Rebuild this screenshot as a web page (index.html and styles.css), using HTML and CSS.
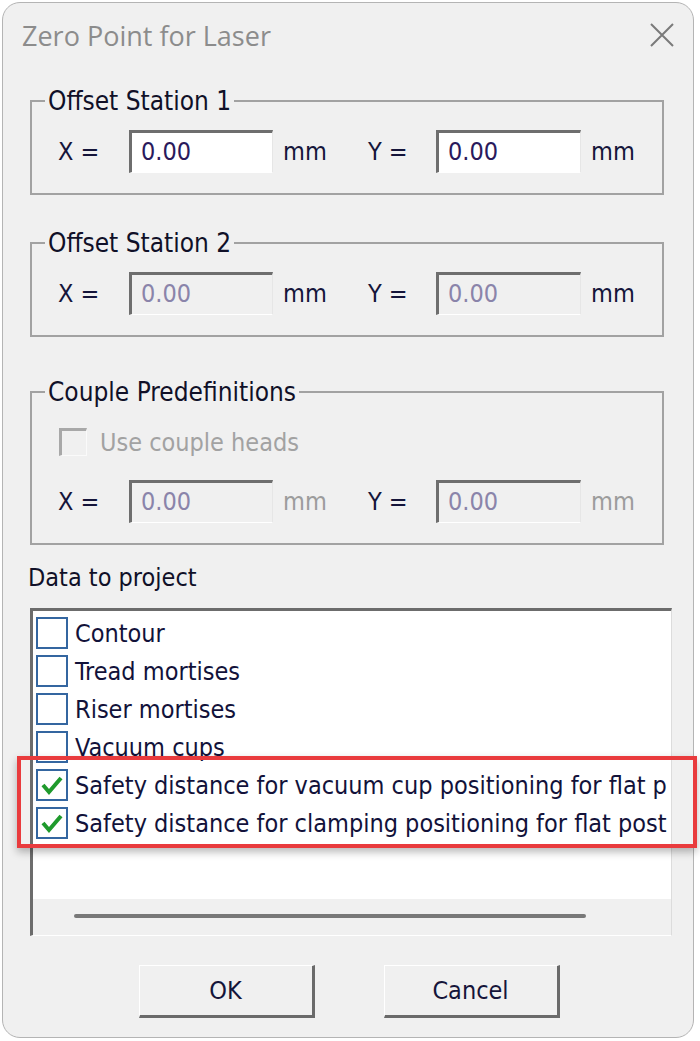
FILE: index.html
```html
<!DOCTYPE html>
<html>
<head>
<meta charset="utf-8">
<link rel="stylesheet" href="styles.css">
</head>
<body>
<div class="window">
  <div class="titlebar">
    <span class="title">Zero Point for Laser</span>
    <svg class="close" width="26" height="26" viewBox="0 0 26 26"><path d="M2 2 L24 24 M24 2 L2 24" stroke="#7a7a7a" stroke-width="2" fill="none"/></svg>
  </div>
  <div class="content">
    <fieldset class="group">
      <legend>Offset Station 1</legend>
      <div class="row">
        <span class="lbl">X =</span><div class="field">0.00</div><span class="unit">mm</span>
        <span class="lbl">Y =</span><div class="field">0.00</div><span class="unit">mm</span>
      </div>
    </fieldset>
    <fieldset class="group g2">
      <legend>Offset Station 2</legend>
      <div class="row">
        <span class="lbl">X =</span><div class="field disabled">0.00</div><span class="unit">mm</span>
        <span class="lbl">Y =</span><div class="field disabled">0.00</div><span class="unit">mm</span>
      </div>
    </fieldset>
    <fieldset class="group g3">
      <legend>Couple Predefinitions</legend>
      <div class="checkrow">
        <span class="dcb"></span><span class="dtext">Use couple heads</span>
      </div>
      <div class="row row3">
        <span class="lbl">X =</span><div class="field disabled">0.00</div><span class="unit dim">mm</span>
        <span class="lbl">Y =</span><div class="field disabled">0.00</div><span class="unit dim">mm</span>
      </div>
    </fieldset>
    <div class="section-label">Data to project</div>
    <div class="list">
      <div class="items">
        <div class="item"><span class="cb"></span><span class="txt">Contour</span></div>
        <div class="item"><span class="cb"></span><span class="txt">Tread mortises</span></div>
        <div class="item"><span class="cb"></span><span class="txt">Riser mortises</span></div>
        <div class="item"><span class="cb"></span><span class="txt">Vacuum cups</span></div>
        <div class="item"><span class="cb"><svg width="28" height="28" viewBox="0 0 28 28"><path d="M5 14 L11 21 L23 7" stroke="#1f9a2c" stroke-width="4" fill="none" stroke-linejoin="miter"/></svg></span><span class="txt">Safety distance for vacuum cup positioning for flat p</span></div>
        <div class="item"><span class="cb"><svg width="28" height="28" viewBox="0 0 28 28"><path d="M5 14 L11 21 L23 7" stroke="#1f9a2c" stroke-width="4" fill="none" stroke-linejoin="miter"/></svg></span><span class="txt">Safety distance for clamping positioning for flat post</span></div>
      </div>
      <div class="hscroll"><div class="thumb"></div></div>
      <div class="highlight"></div>
    </div>
    <div class="buttons">
      <div class="btn">OK</div>
      <div class="btn">Cancel</div>
    </div>
  </div>
</div>
</body>
</html>
```
FILE: styles.css
```css
* { box-sizing: border-box; }
html, body { margin: 0; padding: 0; }
body {
  background: #ffffff;
  width: 700px;
  height: 1041px;
  overflow: hidden;
  font-family: "DejaVu Sans Condensed", "DejaVu Sans", sans-serif;
  color: #15153a;
}
.window {
  margin: 2px 0 0 2px;
  width: 692px;
  height: 1036px;
  background: #f0f0f0;
  border: 1px solid #b4b4b4;
  border-radius: 18px;
}
.titlebar {
  display: flex;
  align-items: flex-start;
  padding: 18px 18px 0 19px;
  height: 50px;
}
.title {
  font-family: "Open Sans", "Noto Sans", sans-serif;
  font-size: 27px;
  line-height: 30px;
  color: #8c8c8c;
}
.close { margin-left: auto; margin-top: 1px; }
.content {
  padding: 34px 21px 0 27px;
}
.group {
  margin: 0 8px 0 0;
  padding: 0;
  min-width: 0;
  border: 2px solid #a2a2a2;
}
.group legend {
  margin-left: 13px;
  padding: 0 3px;
  font-size: 26px;
  line-height: 28px;
  color: #101028;
}
.g2 { margin-top: 34px; }
.g3 { margin-top: 41px; }
.row {
  display: grid;
  grid-template-columns: 71px 144px 95px 68px 145px 1fr;
  align-items: center;
  margin: 15px 0 20px 26px;
  font-size: 25px;
}
.lbl { color: #15153a; }
.field {
  height: 43px;
  background: #ffffff;
  border-top: 3px solid #6e6e6e;
  border-left: 3px solid #6e6e6e;
  border-right: 1px solid #e6e6e6;
  border-bottom: 1px solid #ffffff;
  padding-left: 9px;
  line-height: 38px;
  color: #2a1a5c;
}
.field.disabled {
  background: #f0f0f0;
  color: #8a84aa;
}
.unit { padding-left: 10px; color: #15153a; }
.unit.dim { color: #9c9c9c; }
.checkrow {
  display: flex;
  align-items: center;
  height: 36px;
  margin: 18px 0 0 27px;
}
.dcb {
  width: 28px;
  height: 28px;
  border-top: 3px solid #a8a8a8;
  border-left: 3px solid #a8a8a8;
  border-right: 1px solid #fafafa;
  border-bottom: 1px solid #fafafa;
  background: #f0f0f0;
}
.dtext {
  margin-left: 13px;
  font-size: 25px;
  color: #a2a2a2;
}
.row3 { margin-top: 20px; }
.section-label {
  margin: 18px 0 0 -2px;
  font-size: 25px;
  line-height: 30px;
  color: #101028;
}
.list {
  position: relative;
  margin-top: 15px;
  height: 328px;
  border-top: 3px solid #6c6c6c;
  border-left: 3px solid #6c6c6c;
  border-right: 1px solid #dcdcdc;
  border-bottom: 1px solid #ffffff;
  display: flex;
  flex-direction: column;
}
.items {
  height: 288px;
  background: #ffffff;
  padding: 3px 3px 0 3px;
  overflow: hidden;
}
.item {
  display: flex;
  align-items: center;
  height: 38px;
  white-space: nowrap;
  overflow: hidden;
}
.cb {
  flex: none;
  width: 32px;
  height: 32px;
  border: 2px solid #3466a0;
  background: #ffffff;
  display: flex;
  align-items: center;
  justify-content: center;
}
.txt {
  margin-left: 7px;
  font-size: 25px;
  color: #12123a;
}
.hscroll {
  flex: 1;
  background: #f0f0f0;
  padding-top: 15px;
}
.thumb {
  margin-left: 41px;
  width: 512px;
  height: 4px;
  border-radius: 2px;
  background: #787878;
}
.highlight {
  position: absolute;
  left: -16px;
  top: 145px;
  width: 680px;
  height: 92px;
  border: 4px solid #e93b3d;
  box-shadow: 0 4px 8px rgba(0,0,0,0.28);
}
.buttons {
  display: flex;
  justify-content: center;
  gap: 69px;
  margin-top: 29px;
  padding-right: 4px;
}
.btn {
  width: 176px;
  height: 53px;
  background: #f0f0f0;
  border-top: 1px solid #ffffff;
  border-left: 1px solid #ffffff;
  border-right: 3px solid #6a6a6a;
  border-bottom: 3px solid #6a6a6a;
  display: flex;
  align-items: center;
  justify-content: center;
  font-size: 25px;
  color: #15153a;
}
```
